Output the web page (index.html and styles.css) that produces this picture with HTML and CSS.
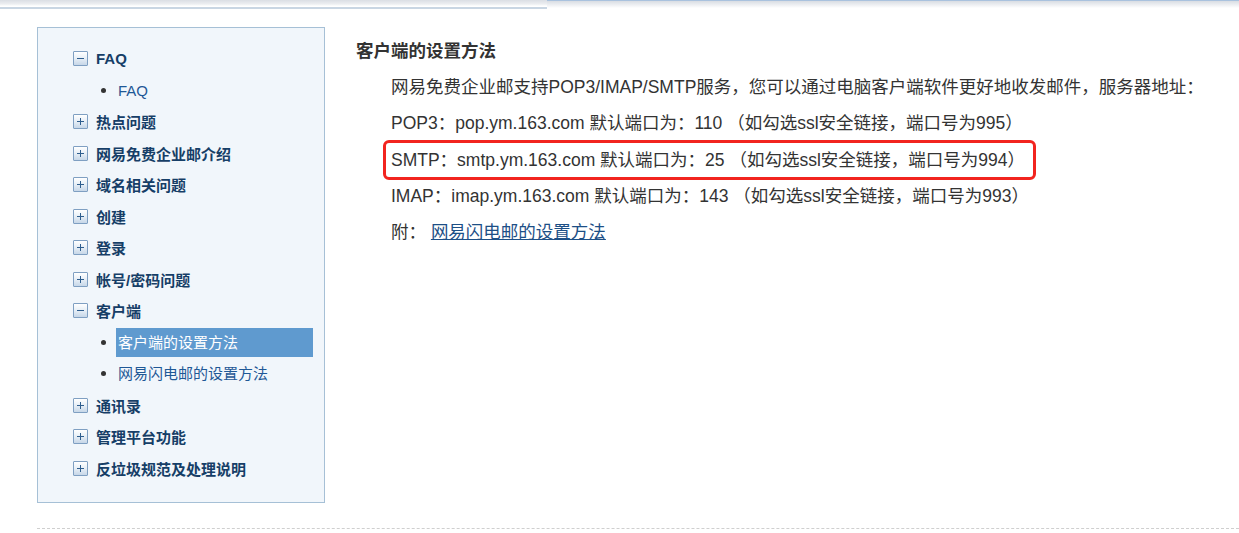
FILE: index.html
```html
<!DOCTYPE html>
<html lang="zh-CN">
<head>
<meta charset="utf-8">
<title>客户端的设置方法</title>
<link rel="stylesheet" href="styles.css">
</head>
<body>
<div class="topbar">
  <div class="topbar-left"></div>
  <div class="topbar-right"></div>
</div>
<div class="page">
  <aside class="sidebar">
    <ul class="tree">
      <li class="node open">
        <div class="node-head"><span class="toggle minus"></span><span class="label">FAQ</span></div>
        <ul class="sub">
          <li><span class="dot"></span><a class="sublink">FAQ</a></li>
        </ul>
      </li>
      <li class="node"><div class="node-head"><span class="toggle plus"></span><span class="label">热点问题</span></div></li>
      <li class="node"><div class="node-head"><span class="toggle plus"></span><span class="label">网易免费企业邮介绍</span></div></li>
      <li class="node"><div class="node-head"><span class="toggle plus"></span><span class="label">域名相关问题</span></div></li>
      <li class="node"><div class="node-head"><span class="toggle plus"></span><span class="label">创建</span></div></li>
      <li class="node"><div class="node-head"><span class="toggle plus"></span><span class="label">登录</span></div></li>
      <li class="node"><div class="node-head"><span class="toggle plus"></span><span class="label">帐号/密码问题</span></div></li>
      <li class="node open">
        <div class="node-head"><span class="toggle minus"></span><span class="label">客户端</span></div>
        <ul class="sub">
          <li><span class="dot"></span><a class="sublink active">客户端的设置方法</a></li>
          <li><span class="dot"></span><a class="sublink">网易闪电邮的设置方法</a></li>
        </ul>
      </li>
      <li class="node"><div class="node-head"><span class="toggle plus"></span><span class="label">通讯录</span></div></li>
      <li class="node"><div class="node-head"><span class="toggle plus"></span><span class="label">管理平台功能</span></div></li>
      <li class="node"><div class="node-head"><span class="toggle plus"></span><span class="label">反垃圾规范及处理说明</span></div></li>
    </ul>
  </aside>
  <main class="content">
    <h2 class="title">客户端的设置方法</h2>
    <div class="body">
      <p class="line">网易免费企业邮支持POP3/IMAP/SMTP服务，您可以通过电脑客户端软件更好地收发邮件，服务器地址：</p>
      <p class="line">POP3：pop.ym.163.com 默认端口为：110 （如勾选ssl安全链接，端口号为995）</p>
      <p class="line"><span class="marked">SMTP：smtp.ym.163.com 默认端口为：25 （如勾选ssl安全链接，端口号为994）</span></p>
      <p class="line">IMAP：imap.ym.163.com 默认端口为：143 （如勾选ssl安全链接，端口号为993）</p>
      <p class="line">附： <a class="link">网易闪电邮的设置方法</a></p>
    </div>
  </main>
</div>
<div class="footer-line"></div>
</body>
</html>
```

FILE: styles.css
```css
* { box-sizing: border-box; }
html, body { margin: 0; padding: 0; background: #fff; }
body {
  font-family: "Liberation Sans", Arial, "Noto Sans CJK SC", sans-serif;
  color: #333;
}

.topbar {
  display: flex;
  height: 9px;
}
.topbar-left {
  width: 547px;
  background: linear-gradient(to bottom, #dadee4 0px, #eceef1 4px, #ffffff 6px, #ffffff 7px, #c9d6e3 7px, #c9d6e3 9px);
}
.topbar-right {
  flex: 1;
  border-top: 1px solid #a9c2de;
  background: linear-gradient(to bottom, #d9dde3 0px, #eef0f3 4px, #ffffff 7px);
}

.page {
  display: flex;
  align-items: flex-start;
  padding: 18px 0 0 37px;
}

.sidebar {
  width: 288px;
  height: 476px;
  flex: none;
  background: #f1f6fb;
  border: 1px solid #a6c0d6;
  padding: 15px 0 0 35px;
}

.tree, .sub {
  list-style: none;
  margin: 0;
  padding: 0;
}

.node-head {
  display: flex;
  align-items: center;
  height: 31.5px;
}

.toggle {
  position: relative;
  width: 15px;
  height: 15px;
  flex: none;
  border: 1px solid #7f9fc2;
  border-radius: 1px;
  background: linear-gradient(to bottom, #ffffff 0%, #e6eef6 50%, #c7d7e8 100%);
  margin-right: 8px;
}
.toggle::before {
  content: "";
  position: absolute;
  left: 3px;
  top: 6px;
  width: 7px;
  height: 1px;
  background: #2f5e8e;
}
.toggle.plus::after {
  content: "";
  position: absolute;
  left: 6px;
  top: 3px;
  width: 1px;
  height: 7px;
  background: #2f5e8e;
}

.label {
  font-size: 15px;
  font-weight: bold;
  color: #163e67;
}

.sub li {
  display: flex;
  align-items: center;
  height: 31.5px;
  padding-left: 28px;
}
.dot {
  width: 5px;
  height: 5px;
  border-radius: 50%;
  background: #333;
  flex: none;
  margin-right: 10px;
}
.sublink {
  display: block;
  font-size: 15px;
  color: #1f5896;
  line-height: 29px;
  height: 29px;
  padding-left: 2px;
}
.sublink.active {
  width: 197px;
  background: #5f9acf;
  color: #fff;
}

.content {
  padding-left: 31px;
}
.title {
  margin: 12px 0 0 0;
  font-size: 17.5px;
  font-weight: bold;
  line-height: 24px;
  color: #333;
}
.body {
  padding-left: 35px;
  margin-top: 6px;
}
.line {
  margin: 0;
  font-size: 17.5px;
  line-height: 36.3px;
  white-space: nowrap;
  color: #333;
}
.marked {
  position: relative;
  display: inline-block;
}
.marked::after {
  content: "";
  position: absolute;
  left: -8px;
  right: -11px;
  top: -2px;
  bottom: -2px;
  border: 3.5px solid #f2241f;
  border-radius: 6px;
}
.link {
  color: #1d4f86;
  text-decoration: underline;
}

.footer-line {
  margin: 25px 0 0 37px;
  border-top: 1px dashed #cfcfcf;
}
```
